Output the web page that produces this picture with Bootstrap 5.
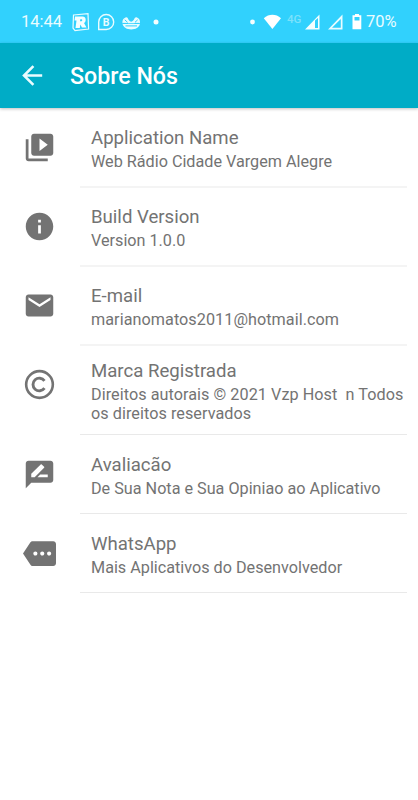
<!DOCTYPE html>
<html lang="pt">
<head>
<meta charset="utf-8">
<meta name="viewport" content="width=device-width, initial-scale=1">
<title>Sobre Nós</title>
<link rel="stylesheet" href="https://cdn.jsdelivr.net/npm/bootstrap@5.3.0/dist/css/bootstrap.min.css">
<style>
body { font-family: Roboto, sans-serif; color: #6f6f6f; min-height: 800px; overflow: hidden; }
svg { display: block; flex: none; }
.status { height: 43px; background: #31d1fd; color: #e9fcff; font-size: 16.5px; line-height: 20px; padding: 1px 21px 0; }
.status .clock { width: 41px; white-space: nowrap; }
.status .pct { width: 31px; margin-left: 4px; font-size: 16.5px; white-space: nowrap; }
.net { font-size: 11.5px; line-height: 12px; font-weight: 500; color: #7be1fb; width: 15px; margin: 0 3px 6px 6px; }
.dot-left { margin-left: 10px; }
.appbar { height: 65px; background: #00acc6; padding: 0 17px; box-shadow: 0 1px 3px rgba(0,0,0,.25); position: relative; }
.appbar h1 { font-size: 23.2px; font-weight: 500; line-height: 28px; margin-left: 22px; padding-top: 1px; }
.entry { color: #737373; }
.entry > svg { width: 33px; height: 33px; margin: 23px 24px 0 23px; fill: #737373; }
.entry-body { min-height: 79px; padding: 14px 0 11px 11px; margin-right: 11px; border-bottom: 1px solid #e9e9e9; }
.entry.soft .entry-body { border-bottom: 2px solid #f4f4f4; }
.entry:first-child .entry-body { min-height: 80px; }
.entry.raised > svg { margin-top: 22px; }
.entry-title { font-size: 18.6px; line-height: 22px; margin-bottom: 3px; font-weight: 400; }
.entry-text { font-size: 16.2px; line-height: 19px; white-space: pre; }
.entry-text.wide { letter-spacing: .055px; }
</style>
</head>
<body class="bg-white">
<div class="status d-flex align-items-center">
  <span class="clock">14:44</span>
  <svg class="ms-2" width="22" height="20" viewBox="0 0 22 20"><path d="M3.500 3 18 1.700 18.600 17 5 18.500 3 16z" fill="none" stroke="#e9fcff" stroke-width="1.200"/><path fill-rule="evenodd" fill="#f4feff" d="M5 4.500h7.500c4 0 4 5.300 1.500 6.500l2.500 4.500h-4.500l-1.700-3-.5 3.500H5.500l1-7.500H4.500zM10.300 7.300 10 9.200h1.500c1 0 1-1.900 0-1.900z"/></svg>
  <svg class="ms-1" width="20" height="20" viewBox="0 0 20 20"><path d="M2.700 17.500V10A7.500 7.500 0 1 1 10.200 17.500z" fill="none" stroke="#e9fcff" stroke-width="1.400"/><text x="10.200" y="13.600" text-anchor="middle" font-family="Roboto" font-size="10.500" font-weight="700" fill="#e9fcff">B</text></svg>
  <svg class="ms-1" width="22" height="20" viewBox="0 0 22 20"><path fill="#e9fcff" d="M2.500 11.800h17.500c-1 4-4.500 5.700-8.800 5.700S3.500 15.800 2.500 11.800z"/><path d="M2.500 11C2.200 7.500 4 6 6.300 5.300 8.500 5.200 7.500 8.500 11.200 9.800 15 8.500 14 5.200 16.200 5.300 18.500 6 20.300 7.500 20 11z" fill="#e9fcff"/><path d="M4.800 7.800 7.500 10.300M17.700 7.800 15 10.300M9.500 5.500 11.200 8 13 5.500M3 11.400h5M14.500 11.400h5" fill="none" stroke="#31d1fd" stroke-width="1"/><path d="M5.500 13.900h11.500" stroke="#31d1fd" stroke-width="1"/></svg>
  <svg class="dot-left" width="8" height="8" viewBox="0 0 8 8"><circle cx="4" cy="4" r="2.500" fill="#f4feff"/></svg>
  <svg class="ms-auto" width="8" height="8" viewBox="0 0 8 8"><circle cx="5.500" cy="4" r="2.400" fill="#f4feff"/></svg>
  <svg class="ms-2" width="18" height="16" viewBox="0 0 18 16"><path fill="#fff" d="M.8 4.300C5.800-.3 13-.3 18 4.300L9.400 15z"/></svg>
  <span class="net">4G</span>
  <svg width="15" height="16" viewBox="0 0 15 16"><path fill="#f4feff" fill-rule="evenodd" d="M0 15.500 14.500.5v15zM10 6.500v7.500h3V4z"/></svg>
  <svg class="ms-2" width="15" height="16" viewBox="0 0 15 16"><path fill="#e9fcff" fill-rule="evenodd" d="M0 15.500 14.500.5v15zM4 13.800h8.800V5z"/></svg>
  <svg class="ms-2" width="11" height="16" viewBox="0 0 11 16"><path fill="#fff" fill-rule="evenodd" d="M4 0h4v1.300h2.300v14H1.500v-14H4zM3.500 3v3.500h5V3z"/></svg>
  <span class="pct">70%</span>
</div>
<header class="appbar d-flex align-items-center text-white">
  <svg width="31" height="31" viewBox="0 0 24 24" fill="#e9fcff"><path d="M19.500 11H7.830l5.590-5.590L12 4l-8 8 8 8 1.410-1.410L7.830 13H19.500z"/></svg>
  <h1 class="mb-0">Sobre Nós</h1>
</header>
<main>
  <section class="entry soft d-flex align-items-start">
    <svg viewBox="0 0 24 24"><path d="M4 6H2v14c0 1.100.9 2 2 2h14v-2H4V6zm16-4H8c-1.100 0-2 .9-2 2v12c0 1.100.9 2 2 2h12c1.100 0 2-.9 2-2V4c0-1.100-.9-2-2-2zm-8 12.500v-9l6 4.500-6 4.500z"/></svg>
    <div class="entry-body flex-grow-1 d-flex flex-column justify-content-center"><h2 class="entry-title">Application Name</h2><p class="entry-text mb-0">Web Rádio Cidade Vargem Alegre</p></div>
  </section>
  <section class="entry soft raised d-flex align-items-start">
    <svg viewBox="0 0 24 24"><path d="M12 2C6.480 2 2 6.480 2 12s4.480 10 10 10 10-4.480 10-10S17.520 2 12 2zm1 15h-2v-6h2v6zm0-8h-2V7h2v2z"/></svg>
    <div class="entry-body flex-grow-1 d-flex flex-column justify-content-center"><h2 class="entry-title">Build Version</h2><p class="entry-text mb-0">Version 1.0.0</p></div>
  </section>
  <section class="entry soft raised d-flex align-items-start">
    <svg viewBox="0 0 24 24"><path d="M20 4H4c-1.100 0-1.990.9-1.990 2L2 18c0 1.100.9 2 2 2h16c1.100 0 2-.9 2-2V6c0-1.100-.9-2-2-2zm0 4l-8 5-8-5V6l8 5 8-5v2z"/></svg>
    <div class="entry-body flex-grow-1 d-flex flex-column justify-content-center"><h2 class="entry-title">E-mail</h2><p class="entry-text wide mb-0">marianomatos2011@hotmail.com</p></div>
  </section>
  <section class="entry raised d-flex align-items-start">
    <svg viewBox="0 0 24 24"><g fill="none" stroke="#737373" stroke-width="1.900"><circle cx="12" cy="12" r="9.700"/><path d="M15.600 9.300A4.600 4.600 0 1 0 15.600 14.700" stroke-width="2.100"/></g></svg>
    <div class="entry-body flex-grow-1 d-flex flex-column justify-content-center"><h2 class="entry-title">Marca Registrada</h2><p class="entry-text wide mb-0">Direitos autorais © 2021 Vzp Host  n Todos
os direitos reservados</p></div>
  </section>
  <section class="entry d-flex align-items-start">
    <svg viewBox="0 0 24 24"><path d="M20 2H4c-1.100 0-1.990.9-1.990 2L2 22l4-4h14c1.100 0 2-.9 2-2V4c0-1.100-.9-2-2-2zM6 14v-2.470l6.880-6.880c.2-.2.510-.2.710 0l1.770 1.770c.2.2.2.510 0 .710L8.470 14H6zm12 0h-7.500l2-2H18v2z"/></svg>
    <div class="entry-body flex-grow-1 d-flex flex-column justify-content-center"><h2 class="entry-title">Avaliacão</h2><p class="entry-text mb-0">De Sua Nota e Sua Opiniao ao Aplicativo</p></div>
  </section>
  <section class="entry d-flex align-items-start">
    <svg viewBox="0 0 24 24"><path d="M22 3H7c-.690 0-1.230.350-1.590.880L0 12l5.410 8.110c.360.530.970.890 1.660.890H22c1.100 0 2-.9 2-2V5c0-1.100-.9-2-2-2zM9 13.500c-.830 0-1.500-.670-1.500-1.500s.670-1.500 1.500-1.500 1.500.670 1.500 1.500-.670 1.500-1.500 1.500zm5 0c-.830 0-1.500-.670-1.500-1.500s.670-1.500 1.500-1.500 1.500.670 1.500 1.500-.670 1.500-1.500 1.500zm5 0c-.830 0-1.500-.670-1.500-1.500s.670-1.500 1.500-1.500 1.500.670 1.500 1.500-.670 1.500-1.500 1.500z"/></svg>
    <div class="entry-body flex-grow-1 d-flex flex-column justify-content-center"><h2 class="entry-title">WhatsApp</h2><p class="entry-text mb-0">Mais Aplicativos do Desenvolvedor</p></div>
  </section>
</main>
<script src="https://cdn.jsdelivr.net/npm/bootstrap@5.3.0/dist/js/bootstrap.bundle.min.js"></script>
</body>
</html>
